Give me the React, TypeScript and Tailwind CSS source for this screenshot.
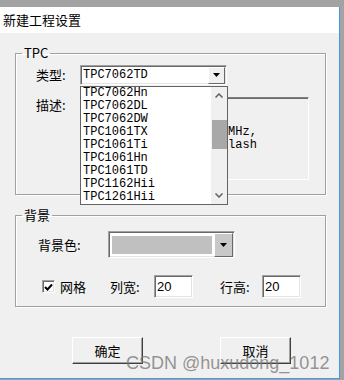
import { useState } from "react";

const cjk = "font-['Noto_Sans_CJK_SC','Noto_Sans',sans-serif]";
const mono = "font-['Liberation_Mono','Noto_Sans_CJK_SC',monospace]";

const models = [
  "TPC7062Hn",
  "TPC7062DL",
  "TPC7062DW",
  "TPC1061TX",
  "TPC1061Ti",
  "TPC1061Hn",
  "TPC1061TD",
  "TPC1162Hii",
  "TPC1261Hii",
];

// sunken 3D edge used by text fields / combo boxes
const sunken =
  "border border-t-[#a0a0a0] border-l-[#a0a0a0] border-r-white border-b-white shadow-[inset_1px_1px_0_#696969,inset_-1px_-1px_0_#e3e3e3]";

function DownArrow() {
  return (
    <svg width="7" height="4" viewBox="0 0 7 4">
      <path d="M0 0h7L3.5 4z" fill="#000" />
    </svg>
  );
}

function Chevron({ up }: { up?: boolean }) {
  return (
    <svg width="8" height="5" viewBox="0 0 8 5">
      <polyline
        points={up ? "0.5,4.5 4,1 7.5,4.5" : "0.5,0.5 4,4 7.5,0.5"}
        fill="none"
        stroke="#606060"
        strokeWidth="1.5"
      />
    </svg>
  );
}

function Legend({ children }: { children: string }) {
  return (
    <legend className={`ml-[6px] px-[2px] text-[13px] leading-[14px] text-black ${cjk}`}>
      {children}
    </legend>
  );
}

export default function App() {
  const [grid, setGrid] = useState(true);

  return (
    <div className="h-[380px] w-[344px] overflow-hidden bg-[#a3a3a3] pt-[7px] pr-[4px]">
      <div className="relative flex h-[372px] w-[340px] flex-col border-r border-b border-[#3d9be9] bg-[#f0f0f0]">
        {/* Title bar */}
        <div className="flex h-[26px] items-center bg-white pl-[3px]">
          <span className={`text-[13px] text-black ${cjk}`}>新建工程设置</span>
        </div>

        {/* TPC group */}
        <fieldset className="mt-[13px] ml-[15px] w-[311px] border border-[#a0a0a0] px-0 pt-[5px] pb-[14px] shadow-[inset_1px_1px_0_#fff,1px_1px_0_#fff]">
          <Legend>TPC</Legend>
          <div className="flex h-[20px] items-center pl-[20px]">
            <span className={`w-[44px] text-[13px] text-black ${cjk}`}>类型:</span>
            <div className="relative">
              <div className={`flex h-[20px] w-[147px] items-center bg-white ${sunken}`}>
                <span className={`flex-1 pl-[2px] text-[12px] leading-none text-black ${mono}`}>
                  TPC7062TD
                </span>
                <div className="mr-[1px] flex h-[17px] w-[17px] items-center justify-center border border-t-white border-l-white border-r-[#696969] border-b-[#696969] bg-[#f0f0f0]">
                  <DownArrow />
                </div>
              </div>

              {/* Open dropdown list */}
              <div className="absolute top-[21px] left-0 z-10 flex h-[119px] w-[148px] border border-[#646464] bg-white">
                <ul className={`flex-1 pl-[2px] text-[12px] leading-[13px] text-black ${mono}`}>
                  {models.map((m) => (
                    <li key={m} className="h-[13px] whitespace-nowrap">
                      {m}
                    </li>
                  ))}
                </ul>
                <div className="flex w-[16px] flex-col items-center bg-[#f0f0f0]">
                  <div className="flex h-[17px] items-center">
                    <Chevron up />
                  </div>
                  <div className="mt-[16px] h-[29px] w-[15px] bg-[#a8a8a8]" />
                  <div className="flex-1" />
                  <div className="flex h-[17px] items-center">
                    <Chevron />
                  </div>
                </div>
              </div>
            </div>
          </div>
          <div className="mt-[12px] flex pl-[20px]">
            <span className={`w-[44px] text-[13px] leading-[16px] text-black ${cjk}`}>描述:</span>
            <div className="h-[83px] w-[229px] border border-t-[#808080] border-l-[#808080] border-r-white border-b-white pt-[2px] pl-[3px] shadow-[inset_0_1px_0_#696969]">
              <p className={`text-[12px] leading-[13px] whitespace-pre text-black ${mono}`}>
                {"TPC7062TD\n7寸 800x480 TFT\nCPU ARM CortexA8 600MHz,\n128M DDR3 RAM,128M Flash"}
              </p>
            </div>
          </div>
        </fieldset>

        {/* Background group */}
        <fieldset className="mt-[13px] ml-[15px] w-[311px] border border-[#a0a0a0] px-0 pt-[9px] pb-[8px] shadow-[inset_1px_1px_0_#fff,1px_1px_0_#fff]">
          <Legend>背景</Legend>
          <div className="flex items-center pl-[22px]">
            <span className={`w-[70px] text-[13px] text-black ${cjk}`}>背景色:</span>
            <div className={`flex h-[27px] w-[127px] items-center bg-white p-[3px] pr-[1px] ${sunken}`}>
              <div className="h-[18px] flex-1 bg-[#c0c0c0]" />
              <div className="ml-[2px] flex h-[24px] w-[19px] items-center justify-center border border-t-white border-l-white border-r-[#696969] border-b-[#696969] bg-[#c8c8c8]">
                <DownArrow />
              </div>
            </div>
          </div>
          <div className="mt-[17px] flex h-[23px] items-center pl-[26px]">
            <button
              type="button"
              onClick={() => setGrid(!grid)}
              className={`flex h-[13px] w-[13px] items-center justify-center bg-white ${sunken}`}
            >
              {grid && (
                <svg width="9" height="8" viewBox="0 0 9 8">
                  <polyline points="1,4 3.5,6.5 8,1.5" fill="none" stroke="#000" strokeWidth="2" />
                </svg>
              )}
            </button>
            <span className={`ml-[5px] w-[50px] text-[13px] text-black ${cjk}`}>网格</span>
            <span className={`w-[44px] text-[13px] text-black ${cjk}`}>列宽:</span>
            <div className={`flex h-[23px] w-[39px] items-center bg-white pl-[2px] ${sunken}`}>
              <span className="font-['Liberation_Sans',sans-serif] text-[13px] text-black">20</span>
            </div>
            <span className={`ml-[27px] w-[42px] text-[13px] text-black ${cjk}`}>行高:</span>
            <div className={`flex h-[23px] w-[39px] items-center bg-white pl-[2px] ${sunken}`}>
              <span className="font-['Liberation_Sans',sans-serif] text-[13px] text-black">20</span>
            </div>
          </div>
        </fieldset>

        {/* Buttons */}
        <div className="mt-[30px] flex gap-[77px] pl-[72px]">
          {["确定", "取消"].map((label) => (
            <button
              key={label}
              type="button"
              className={`h-[27px] w-[71px] border border-t-white border-l-white border-r-[#404040] border-b-[#404040] bg-[#f0f0f0] text-[13px] text-black shadow-[inset_-1px_-1px_0_#a0a0a0] ${cjk}`}
            >
              {label}
            </button>
          ))}
        </div>

        {/* Watermark */}
        <span className="pointer-events-none absolute top-[343px] left-[126px] font-['Liberation_Sans',sans-serif] text-[18px] whitespace-nowrap text-[#7a7a7a]/80">
          CSDN @huxudong_1012
        </span>
      </div>
    </div>
  );
}
